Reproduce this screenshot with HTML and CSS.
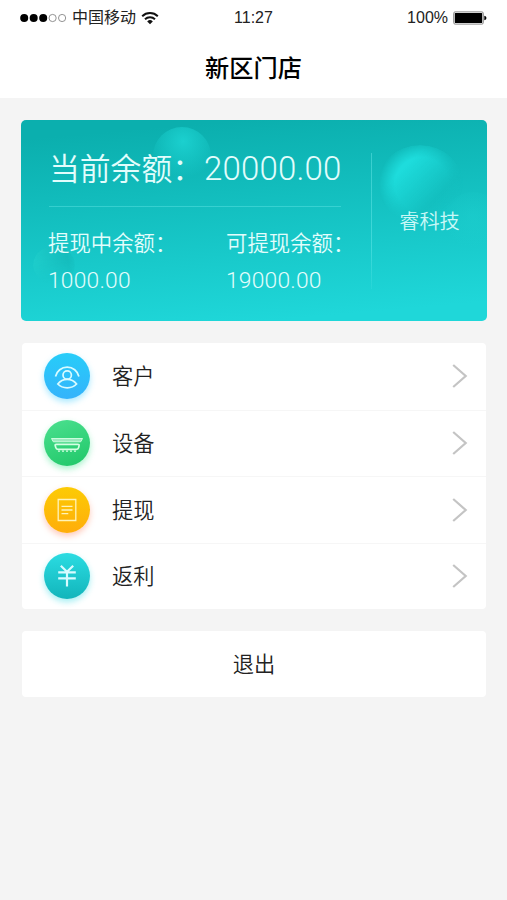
FILE: index.html
```html
<!DOCTYPE html>
<html lang="zh-CN">

<head>
    <meta charset="UTF-8">
    <meta name="viewport" content="width=device-width, initial-scale=1.0">
    <title>新区门店</title>
    <link rel="stylesheet" href="styles.css">
</head>

<body>
    <header class="header">
        <div class="status-bar">
            <div class="status-left">
                <svg class="signal" width="47" height="10" viewBox="0 0 47 10">
                    <circle cx="4.2" cy="5" r="4" />
                    <circle cx="13.7" cy="5" r="4" />
                    <circle cx="23.2" cy="5" r="4" />
                    <circle class="empty" cx="32.6" cy="5" r="3.6" />
                    <circle class="empty" cx="42.1" cy="5" r="3.6" />
                </svg>
                <span class="carrier">中国移动</span>
                <svg class="wifi" width="18" height="14" viewBox="0 0 18 14">
                    <path d="M1.2 5.2a11.2 11.2 0 0 1 15.6 0M4 8.2a7.2 7.2 0 0 1 10 0" />
                    <path class="wifi-dot" d="M6.2 10.4a4 4 0 0 1 5.6 0L9 13.2z" />
                </svg>
            </div>
            <span class="time">11:27</span>
            <div class="status-right">
                <span>100%</span>
                <svg width="34" height="14" viewBox="0 0 34 14">
                    <rect x=".7" y=".9" width="29.6" height="12.2" rx="1.4" fill="#fff" stroke="#888" />
                    <rect x="1.8" y="2" width="27.4" height="10" rx=".6" />
                    <path d="M31.3 4.8q2.2.4 2.2 2.2t-2.2 2.2z" />
                </svg>
            </div>
        </div>
        <h1 class="title">新区门店</h1>
    </header>

    <main class="content">
        <section class="card">
            <i class="bubble bubble-top"></i>
            <i class="bubble bubble-left"></i>
            <i class="bubble bubble-right"></i>
            <i class="bubble bubble-edge"></i>
            <div class="balance">
                <div class="total">当前余额：<span class="total-num">20000.00</span></div>
                <div class="detail">
                    <div class="detail-item">
                        <p>提现中余额：</p>
                        <p class="num">1000.00</p>
                    </div>
                    <div class="detail-item">
                        <p>可提现余额：</p>
                        <p class="num">19000.00</p>
                    </div>
                </div>
            </div>
            <div class="company">睿科技</div>
        </section>

        <ul class="menu">
            <li class="menu-item">
                <span class="icon icon-customer">
                    <svg width="46" height="46" viewBox="0 0 46 46">
                        <path d="M11.5 23.5a12 12 0 0 1 23.4 0" />
                        <circle cx="23.2" cy="22" r="4.2" />
                        <path d="M13.8 31q3.6-4.6 9.4-4.6t9.4 4.6q-3.6 3.8-9.4 3.8T13.8 31z" />
                    </svg>
                </span>
                <span class="name">客户</span>
                <svg class="arrow" width="16" height="24" viewBox="0 0 16 24"><path d="M1.2 1 13.7 12 1.2 23" /></svg>
            </li>
            <li class="menu-item">
                <span class="icon icon-device">
                    <svg width="46" height="46" viewBox="0 0 46 46">
                        <path class="soft" d="M7.5 18.5h31l-1.8 3.3H9.3z" />
                        <path d="M12.3 24.3h21.6q1.5 0 1.2 1.3l-.5 2q-.4 1.8-2.2 1.8H14q-1.8 0-2.2-1.8l-.6-2q-.3-1.3 1.1-1.3z" />
                        <path class="thin" d="M14 31.2h2m2 0h2m2 0h2m2 0h2m2 0h2" />
                    </svg>
                </span>
                <span class="name">设备</span>
                <svg class="arrow" width="16" height="24" viewBox="0 0 16 24"><path d="M1.2 1 13.7 12 1.2 23" /></svg>
            </li>
            <li class="menu-item">
                <span class="icon icon-withdraw">
                    <svg width="46" height="46" viewBox="0 0 46 46">
                        <path class="thin" d="M14.2 12.5h17.6v21H14.2zM17.5 19.4h11M17.5 23h11M17.5 26.6h6.8" />
                    </svg>
                </span>
                <span class="name">提现</span>
                <svg class="arrow" width="16" height="24" viewBox="0 0 16 24"><path d="M1.2 1 13.7 12 1.2 23" /></svg>
            </li>
            <li class="menu-item">
                <span class="icon icon-rebate">
                    <svg width="46" height="46" viewBox="0 0 46 46">
                        <path class="bold" d="M16.8 12.8l6.2 6 6.2-6M14.2 19.3h17.6M14.2 25.3h17.6M23 19v14.6" />
                    </svg>
                </span>
                <span class="name">返利</span>
                <svg class="arrow" width="16" height="24" viewBox="0 0 16 24"><path d="M1.2 1 13.7 12 1.2 23" /></svg>
            </li>
        </ul>

        <button class="logout" type="button">退出</button>
    </main>
</body>

</html>
```
FILE: styles.css
```css
* {
    box-sizing: border-box;
    margin: 0;
    padding: 0;
}

body {
    min-height: 100vh;
    background-color: #f4f4f4;
    font-family: "Noto Sans CJK SC", sans-serif;
    color: #222;
}

.header {
    height: 98px;
    background-color: #fff;
    color: #000;
}

.status-bar {
    display: grid;
    grid-template-columns: 1fr auto 1fr;
    align-items: center;
    height: 35px;
    padding: 0 20px;
    font-family: "Liberation Sans", "Noto Sans CJK SC", sans-serif;
    font-size: 16px;
    color: #222;
}

.status-left,
.status-right {
    display: flex;
    align-items: center;
}

.status-right {
    justify-content: flex-end;
    gap: 5px;
}

.signal .empty {
    fill: none;
    stroke: #777;
    stroke-width: .8;
}

.carrier {
    margin: 0 5px 0 5px;
    line-height: 20px;
}

.wifi {
    fill: none;
    stroke: #111;
    stroke-width: 2;
}

.wifi .wifi-dot {
    fill: #111;
    stroke: none;
}

.title {
    font-size: 24.2px;
    font-weight: 500;
    line-height: 63px;
    text-align: center;
}

.content {
    padding: 22px 20px 0 21px;
}

.card {
    position: relative;
    display: flex;
    height: 201px;
    padding: 28px 0 0 28px;
    border-radius: 5px;
    overflow: hidden;
    background: linear-gradient(175deg, #0bafae 8%, #1fd7d9 92%);
    color: #e2fdfc;
    font-weight: 350;
}

/* background bubbles */
.bubble {
    position: absolute;
    border-radius: 50%;
}

.bubble-top {
    left: 132px;
    top: 7px;
    width: 58px;
    height: 58px;
    background: radial-gradient(circle at 52% 25%, #1bd0cf, rgba(27, 208, 207, 0) 68%);
}

.bubble-left {
    left: 12px;
    top: 126px;
    width: 42px;
    height: 38px;
    background: linear-gradient(80deg, rgba(35, 211, 207, .65), rgba(18, 178, 178, .5) 80%, rgba(18, 178, 178, 0));
    -webkit-mask-image: linear-gradient(#000 40%, transparent);
    mask-image: linear-gradient(#000 40%, transparent);
}

.bubble-right {
    left: 356px;
    top: 25px;
    width: 86px;
    height: 78px;
    background: linear-gradient(135deg, #1edcdc 30%, rgba(19, 190, 190, .6) 68%, rgba(19, 190, 190, 0) 82%);
    -webkit-mask-image: radial-gradient(circle at 52% 50%, #000 45%, transparent 72%);
    mask-image: radial-gradient(circle at 52% 50%, #000 45%, transparent 72%);
}

.bubble-edge {
    left: 422px;
    top: 72px;
    width: 60px;
    height: 60px;
    background: radial-gradient(circle at 50% 40%, rgba(33, 213, 212, .3), rgba(33, 213, 212, 0) 68%);
}

.balance {
    position: relative;
    width: 323px;
    height: 146px;
    padding-right: 31px;
}

/* divider that fades out at the bottom */
.balance::after {
    content: "";
    position: absolute;
    top: 5px;
    right: 0;
    width: 1px;
    height: 136px;
    background: linear-gradient(rgba(120, 240, 240, .4) 0, rgba(120, 240, 240, .4) 70%, rgba(120, 240, 240, .1));
}

.total {
    height: 59px;
    border-bottom: 1px solid rgba(120, 240, 240, .35);
    font-size: 30.8px;
    line-height: 37px;
    white-space: nowrap;
}

.total-num {
    margin-left: 1px;
    font-family: Roboto, sans-serif;
    font-size: 33px;
    font-weight: 300;
    letter-spacing: .2px;
}

.detail {
    display: grid;
    grid-template-columns: 178px 1fr;
    padding-top: 15px;
    font-size: 21.4px;
    line-height: 39px;
    white-space: nowrap;
}

.detail-item {
    margin-left: -1px;
}

.num {
    font-family: Roboto, sans-serif;
    font-size: 22.8px;
    font-weight: 300;
    letter-spacing: .2px;
}

.company {
    position: relative;
    flex: 1;
    padding-top: 58px;
    font-size: 20.2px;
    line-height: 30px;
    text-align: center;
    color: #c9f8f7;
}

.menu {
    margin: 22px 1px 0;
    border-radius: 4px;
    background-color: #fff;
    list-style: none;
}

.menu-item {
    display: flex;
    align-items: center;
    height: 66.5px;
    padding: 0 18px 0 22px;
}

.menu-item + .menu-item {
    border-top: 1px solid #f6f6f6;
}

.icon {
    width: 46px;
    height: 46px;
    border-radius: 50%;
}

.icon svg {
    display: block;
    fill: none;
    stroke: #d8fbff;
    stroke-width: 1.7;
}

.icon .thin {
    stroke-width: 1.3;
}

.icon .bold {
    stroke-width: 2.2;
}

.icon .soft {
    fill: rgba(255, 255, 255, .5);
    stroke-width: .9;
}

.icon-customer {
    background: linear-gradient(#27cdf9, #34b3fb);
    box-shadow: 0 3px 6px rgba(40, 200, 255, .4);
}

.icon-device {
    background: linear-gradient(160deg, #4ce08f, #1fc768);
    box-shadow: 0 3px 6px rgba(40, 225, 130, .4);
}

.icon-device svg {
    stroke: #d5ffe4;
}

.icon-withdraw {
    background: linear-gradient(#fccb04, #ffad0b);
    box-shadow: 0 3px 6px rgba(255, 120, 80, .4);
}

.icon-withdraw svg {
    stroke: #fff3b8;
}

.icon-rebate {
    background: linear-gradient(#2bdce2, #12b5bb);
    box-shadow: 0 3px 6px rgba(30, 215, 225, .4);
}

.name {
    flex: 1;
    margin: -2px 0 0 22px;
    font-size: 21.2px;
    font-weight: 350;
    line-height: 32px;
}

.arrow {
    fill: none;
    stroke: #c4c4c4;
    stroke-width: 2.2;
}

.logout {
    display: block;
    width: 464px;
    height: 66px;
    margin: 22px 1px 0;
    padding-bottom: 4px;
    border: none;
    border-radius: 4px;
    background-color: #fff;
    color: #222;
    font-family: inherit;
    font-size: 21.2px;
    font-weight: 350;
}
```
